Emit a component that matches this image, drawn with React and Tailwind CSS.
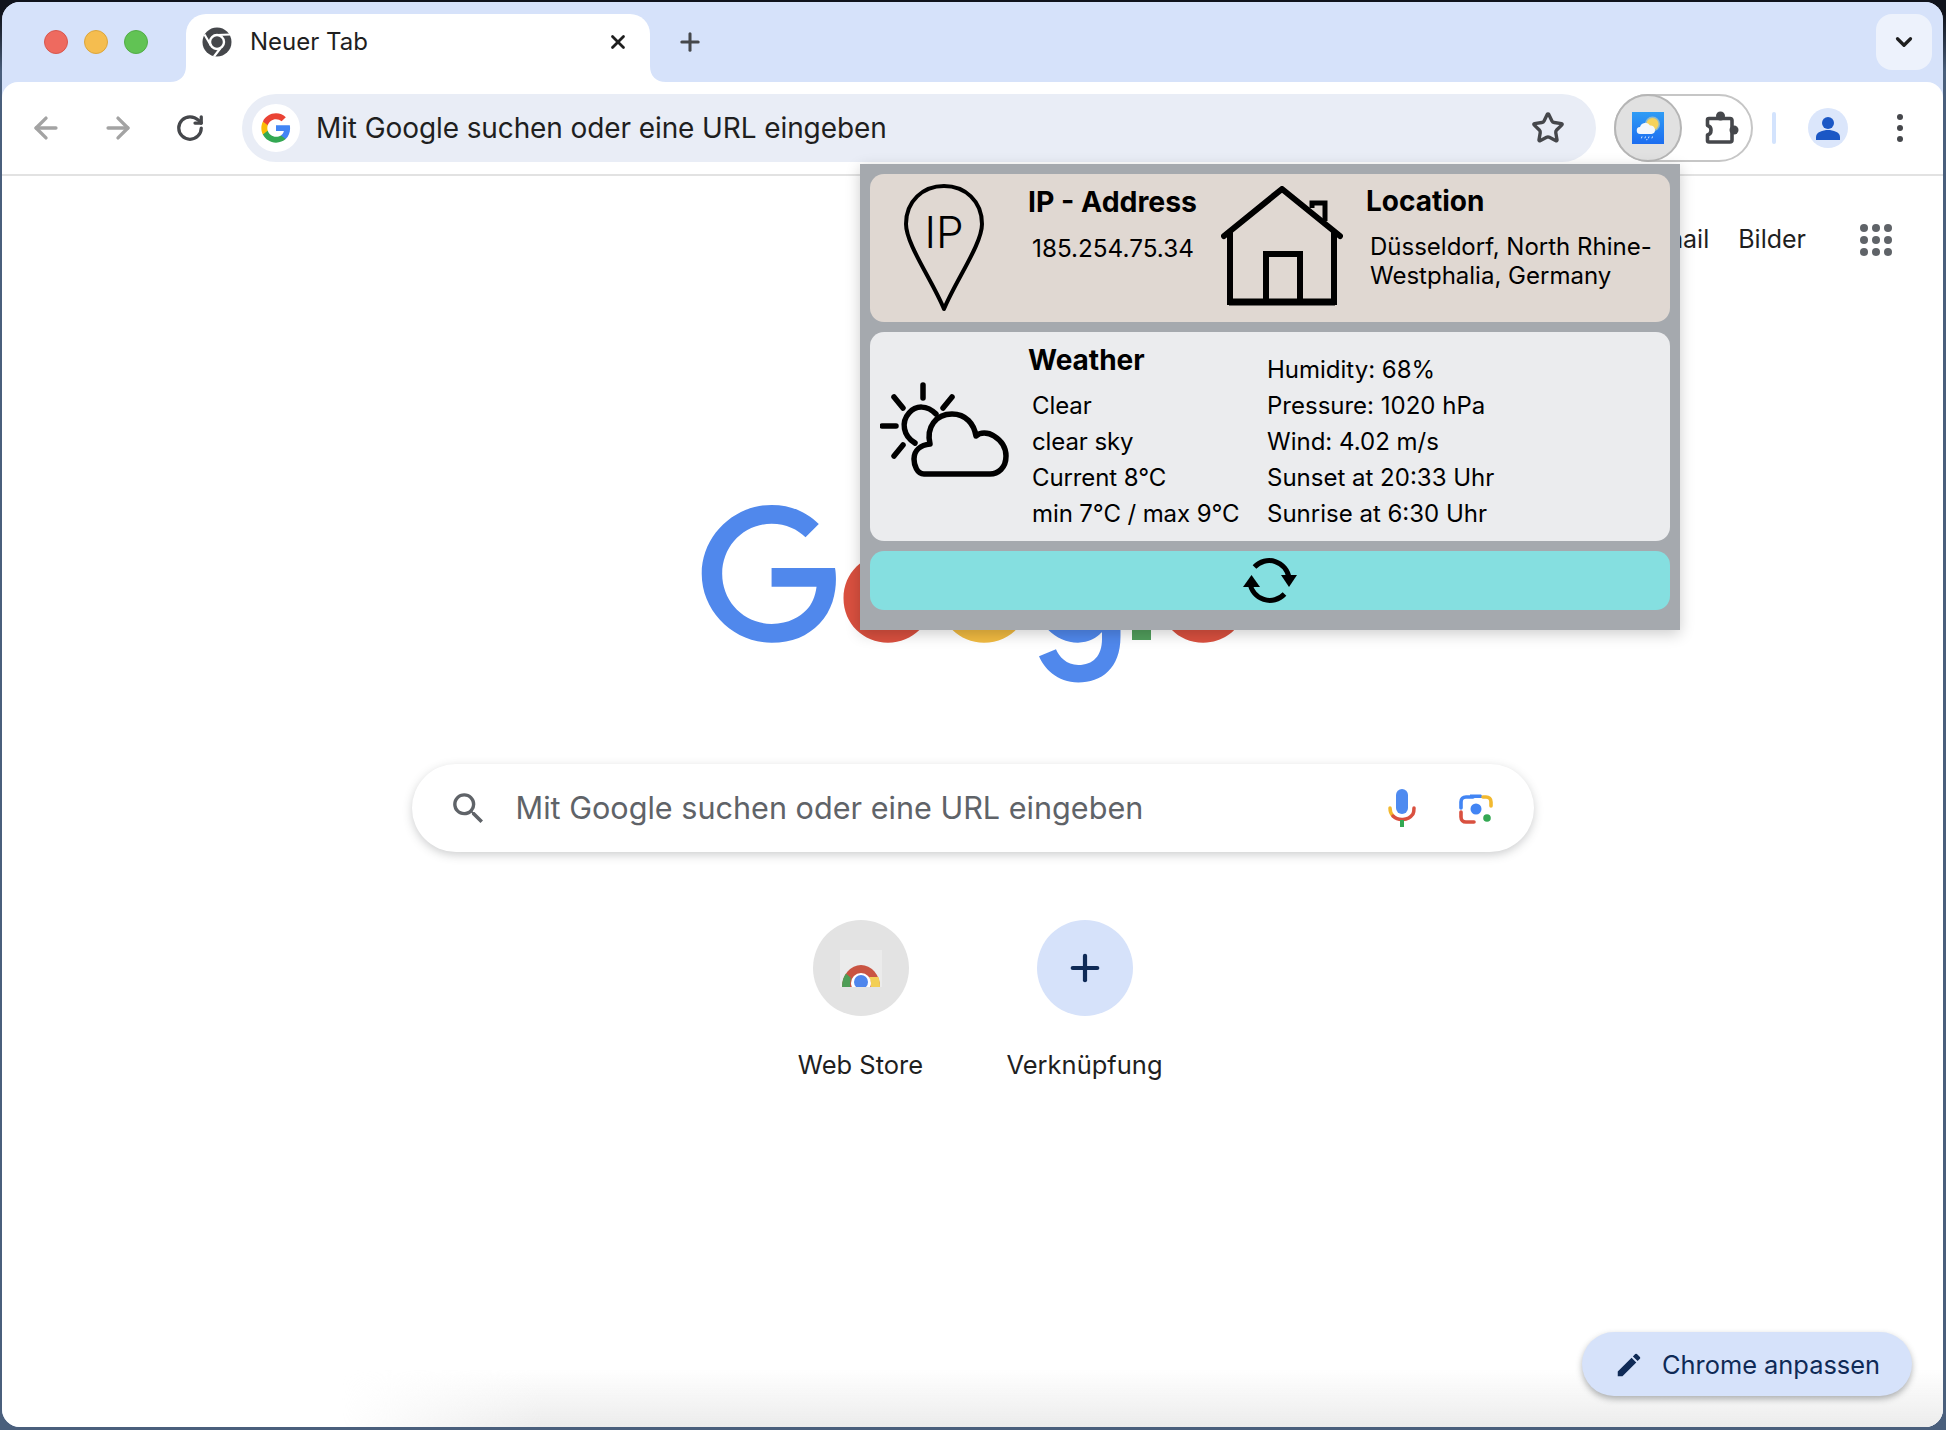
import React from 'react';
import { ArrowLeft, ArrowRight, RotateCw, Star, ChevronDown, Plus, X } from 'lucide-react';

const FONT = "font-['Inter','Noto_Sans',sans-serif]";

const GoogleG = ({ size = 32 }) => (
  <svg width={size} height={size} viewBox="0 0 24 24">
    <path fill="#4285F4" d="M22.56 12.25c0-.78-.07-1.53-.2-2.25H12v4.26h5.92c-.26 1.37-1.04 2.53-2.21 3.31v2.77h3.57c2.08-1.92 3.28-4.74 3.28-8.09z" />
    <path fill="#34A853" d="M12 23c2.97 0 5.46-.98 7.28-2.66l-3.57-2.77c-.98.66-2.23 1.06-3.71 1.06-2.86 0-5.29-1.93-6.16-4.53H2.18v2.84C3.99 20.53 7.7 23 12 23z" />
    <path fill="#FBBC05" d="M5.84 14.09c-.22-.66-.35-1.36-.35-2.09s.13-1.43.35-2.09V7.07H2.18C1.43 8.55 1 10.22 1 12s.43 3.45 1.18 4.93l2.85-2.22.81-.62z" />
    <path fill="#EA4335" d="M12 5.38c1.62 0 3.06.56 4.21 1.64l3.15-3.15C17.45 2.09 14.97 1 12 1 7.7 1 3.99 3.47 2.18 7.07l3.66 2.84c.87-2.6 3.3-4.53 6.16-4.53z" />
  </svg>
);

const GoogleLogo = () => (
  <svg width="544" height="184" viewBox="0 0 272 92">
    <path fill="#D9503F" d="M115.75 47.18c0 12.77-9.99 22.18-22.25 22.18s-22.25-9.41-22.25-22.18C71.25 34.32 81.24 25 93.5 25s22.25 9.32 22.25 22.18zm-9.74 0c0-7.98-5.79-13.44-12.51-13.44S80.99 39.2 80.99 47.18c0 7.9 5.79 13.44 12.51 13.44s12.51-5.55 12.51-13.44z" />
    <path fill="#F0BA41" d="M163.75 47.18c0 12.77-9.99 22.18-22.25 22.18s-22.25-9.41-22.25-22.18c0-12.85 9.99-22.18 22.25-22.18s22.25 9.32 22.25 22.18zm-9.74 0c0-7.98-5.79-13.44-12.51-13.44s-12.51 5.46-12.51 13.44c0 7.9 5.79 13.44 12.51 13.44s12.51-5.55 12.51-13.44z" />
    <path fill="#5088EC" d="M209.75 26.34v39.82c0 16.38-9.66 23.07-21.08 23.07-10.75 0-17.22-7.19-19.66-13.07l8.48-3.53c1.51 3.61 5.21 7.87 11.17 7.87 7.31 0 11.84-4.51 11.84-13v-3.19h-.34c-2.18 2.69-6.38 5.04-11.68 5.04-11.09 0-21.25-9.66-21.25-22.09 0-12.52 10.16-22.26 21.25-22.26 5.29 0 9.49 2.35 11.68 4.96h.34v-3.61h9.25zm-8.56 20.92c0-7.81-5.21-13.52-11.84-13.52-6.72 0-12.35 5.71-12.35 13.52 0 7.73 5.63 13.36 12.35 13.36 6.63 0 11.84-5.63 11.84-13.36z" />
    <path fill="#519E5C" d="M225 3v65h-9.5V3h9.5z" />
    <path fill="#D9503F" d="M262.02 54.48l7.56 5.04c-2.44 3.61-8.32 9.83-18.48 9.83-12.6 0-22.01-9.74-22.01-22.18 0-13.19 9.49-22.18 20.92-22.18 11.51 0 17.14 9.16 18.98 14.11l1.01 2.52-29.65 12.28c2.27 4.45 5.8 6.72 10.75 6.72 4.96 0 8.4-2.44 10.92-6.14zm-23.27-7.98l19.82-8.23c-1.09-2.77-4.37-4.7-8.23-4.7-4.95 0-11.84 4.37-11.59 12.93z" />
    <path fill="#5088EC" d="M35.29 41.41V32H67c.31 1.64.47 3.58.47 5.68 0 7.06-1.93 15.79-8.15 22.01-6.05 6.3-13.78 9.66-24.02 9.66C16.32 69.35.36 53.89.36 34.91.36 15.93 16.32.47 35.3.47c10.5 0 17.98 4.12 23.6 9.49l-6.64 6.64c-4.03-3.78-9.49-6.72-16.97-6.72-13.86 0-24.7 11.17-24.7 25.03 0 13.86 10.84 25.03 24.7 25.03 8.99 0 14.11-3.61 17.39-6.89 2.66-2.66 4.41-6.46 5.1-11.65l-22.49.01z" />
  </svg>
);

const ChromeMono = () => (
  <svg width="30" height="30" viewBox="0 0 30 30">
    <circle cx="15" cy="15" r="14.5" fill="#45474b" />
    <circle cx="15" cy="15" r="7" fill="none" stroke="#fff" strokeWidth="2.4" />
    <path d="M15 8 L28.5 7.5 M8.9 18.5 L2.5 7.5 M18.6 21 L12 29.5" stroke="#fff" strokeWidth="2.2" fill="none" />
  </svg>
);

const WeatherAppIcon = () => (
  <svg width="32" height="32" viewBox="0 0 32 32">
    <defs>
      <linearGradient id="skyGrad" x1="0" y1="0" x2="0" y2="1">
        <stop offset="0" stopColor="#2f9cf5" />
        <stop offset="1" stopColor="#1c6df0" />
      </linearGradient>
    </defs>
    <rect width="32" height="32" fill="url(#skyGrad)" />
    <circle cx="20.5" cy="12" r="7.500" fill="#8fb9c8" />
    <circle cx="20.5" cy="12" r="6" fill="#f6d25a" />
    <path d="M8.500 22a3.500 3.500 0 0 1-.5-7 5.500 5.500 0 0 1 10-1.500 4.300 4.300 0 0 1 5 4.200 4.200 4.200 0 0 1-3.500 4.300z" fill="#f3f7fc" />
    <path d="M10 24.500l-.6 1.800M13.500 24.500l-.6 1.800M17 24.500l-.6 1.800M20.500 24.500l-.6 1.800M15 27l-.3 1.200" stroke="#dbeafe" strokeWidth="1" />
  </svg>
);

const PuzzleIcon = () => (
  <svg width="34" height="36" viewBox="0 0 34 36" fill="none">
    <circle cx="15.500" cy="6" r="4.500" fill="#45474b" />
    <circle cx="29" cy="20" r="4.500" fill="#45474b" />
    <path
      d="M4 8.500H25a2 2 0 0 1 2 2V30a2 2 0 0 1-2 2H4a1.500 1.500 0 0 1-1.500-1.500V25a4.800 4.800 0 0 0 3.500-4.700A4.800 4.800 0 0 0 2.500 15.500V10a1.500 1.500 0 0 1 1.500-1.500z"
      stroke="#45474b"
      strokeWidth="3.600"
      strokeLinejoin="round"
    />
  </svg>
);

const PinIcon = () => (
  <svg width="80" height="128" viewBox="0 0 80 128" fill="none">
    <path d="M40 125 C28 96 2 60 2 40 C2 17 19 2 40 2 C61 2 78 17 78 40 C78 60 52 96 40 125 Z" stroke="#000" strokeWidth="4" strokeLinejoin="round" />
  </svg>
);

const HouseIcon = () => (
  <svg width="122" height="120" viewBox="0 0 122 120" fill="none" stroke="#000">
    <path d="M3 50 L61 3 L119 50" strokeWidth="6" strokeLinecap="round" strokeLinejoin="round" />
    <path d="M9 45 V116 H113 V45" strokeWidth="6" />
    <path d="M8 116 H114" strokeWidth="7" />
    <path d="M45 116 V68 H79 V116" strokeWidth="6" />
    <path d="M91 22 V17 H104 V35" strokeWidth="5" />
  </svg>
);

const WeatherIcon = () => (
  <svg width="130" height="96" viewBox="0 0 130 96" fill="none" stroke="#000" strokeWidth="5.500" strokeLinecap="round" strokeLinejoin="round">
    <path d="M43 3 V16 M14 15 L23 26 M72 15 L63 26 M2 44 H16 M23 63 L14 74" />
    <path d="M56 32 C47 23 36 23 29 31 C21 40 23 54 35 61" />
    <path d="M44 92 C37 92 34 83 34 77 C34 68 41 63 50 62 C46 45 56 32 72 32 C86 32 94 42 96 54 C100 50 108 50 114 54 C122 59 126 66 126 74 C126 86 118 92 110 92 Z" />
  </svg>
);

const SyncIcon = () => (
  <svg width="56" height="46" viewBox="0 0 56 46" fill="none" stroke="#000" strokeWidth="5">
    <path d="M12.500 9 A20 20 0 0 1 47 20" />
    <path d="M42.500 36 A20 20 0 0 1 8 25" />
    <path d="M39 17 H55 L47 29 Z" fill="#000" stroke="none" />
    <path d="M9.500 17 L18 29 H1 Z" fill="#000" stroke="none" />
  </svg>
);

const LensIcon = () => (
  <svg width="36" height="34" viewBox="0 0 36 34" fill="none" strokeWidth="3.600" strokeLinecap="round">
    <path d="M12 3.500 H23 L26 7 H12 Z" fill="#4285f4" />
    <path d="M3 17 V11 C3 8 5 6 8 6 H15" stroke="#4285f4" />
    <path d="M25 6 H28 C31 6 33 8 33 11 V15" stroke="#f2b92f" />
    <path d="M3 21 V26 C3 29 5 31 8 31 H16" stroke="#d9503f" />
    <circle cx="18" cy="18" r="5.500" fill="#4285f4" />
    <circle cx="29" cy="27" r="3.800" fill="#34a853" />
  </svg>
);

const MicIcon = () => (
  <svg width="28" height="40" viewBox="0 0 28 40" fill="none">
    <rect x="8" y="1" width="12" height="25" rx="6" fill="#4f8bf0" />
    <path d="M2 20 C2 24 3 26 5 28" stroke="#f2b92f" strokeWidth="3.500" strokeLinecap="round" />
    <path d="M5 28 C10 33 20 33 25 26 C26 24 26 22 26 20" stroke="#d9503f" strokeWidth="3.500" strokeLinecap="round" />
    <rect x="12" y="32" width="4" height="7" fill="#34a853" />
  </svg>
);

const WebStoreIcon = () => (
  <svg width="42" height="37" viewBox="0 0 42 37">
    <rect width="42" height="37" fill="#ebebeb" />
    <path d="M2 37 A19 22 0 0 1 40 37 Z" fill="#c95442" />
    <path d="M2 37 C2 31 3.500 27 6 23.500 L11 28 C10 31 10 34 10 37 Z" fill="#4f9e57" />
    <path d="M29 27 H38.500 C39.500 30 40 33 40 37 H31 C31 33 30.500 30 29 27 Z" fill="#f3cf55" />
    <circle cx="21" cy="33" r="10" fill="#fff" />
    <circle cx="21" cy="32" r="7" fill="#4f86ec" />
  </svg>
);

const PencilIcon = () => (
  <svg width="30" height="30" viewBox="0 0 24 24" fill="#0f2a56">
    <path d="M3 17.250V21h3.750L17.810 9.940l-3.750-3.750L3 17.250zM20.710 7.040a1 1 0 0 0 0-1.410l-2.340-2.340a1 1 0 0 0-1.410 0l-1.830 1.830 3.750 3.750 1.830-1.830z" />
  </svg>
);

const AvatarIcon = () => (
  <svg width="26" height="26" viewBox="0 0 26 26" fill="#1b57c5">
    <circle cx="13" cy="8" r="6" />
    <path d="M1 25 V22 C1 17 8 15 13 15 C18 15 25 17 25 22 V25 Z" />
  </svg>
);

function TabStrip() {
  return (
    <div className="h-[80px] shrink-0 bg-[#d6e2fa] flex items-end pl-[42px] pr-[11px] relative">
      <div className="flex gap-[16px] h-[56px] items-center self-start mt-[12px] w-[142px] shrink-0">
        <span className="w-[24px] h-[24px] rounded-full bg-[#ee6a5f] border border-[#d8574d]" />
        <span className="w-[24px] h-[24px] rounded-full bg-[#f5bd4f] border border-[#dca63c]" />
        <span className="w-[24px] h-[24px] rounded-full bg-[#61c354] border border-[#52ad46]" />
      </div>
      <div className="relative w-[464px] h-[68px] bg-white rounded-t-[20px] flex items-center pl-[16px] pr-[21px] pb-[12px]">
        <svg className="absolute -left-[16px] bottom-0" width="16" height="16" viewBox="0 0 16 16">
          <path d="M16 0 C16 10 10 16 0 16 H16 Z" fill="#fff" />
        </svg>
        <svg className="absolute -right-[16px] bottom-0" width="16" height="16" viewBox="0 0 16 16">
          <path d="M0 0 C0 10 6 16 16 16 H0 Z" fill="#fff" />
        </svg>
        <ChromeMono />
        <span className="ml-[18px] text-[24px] text-[#1f1f1f] flex-1">Neuer Tab</span>
        <X size={22} strokeWidth={3} className="text-[#1f1f1f]" />
      </div>
      <div className="self-start mt-[26px] ml-[26px] text-[#45474b]">
        <Plus size={28} strokeWidth={2.6} />
      </div>
      <div className="ml-auto self-start mt-[12px] w-[56px] h-[56px] rounded-[16px] bg-[#edf2fc] flex items-center justify-center text-[#1f1f1f]">
        <ChevronDown size={26} strokeWidth={3} />
      </div>
    </div>
  );
}

function Toolbar() {
  return (
    <div className="h-[94px] shrink-0 bg-white rounded-t-[16px] border-b-2 border-[#e2e2e2] flex items-center pl-[27px]">
      <div className="flex items-center gap-[38px] text-[#a3a3a3] w-[213px] shrink-0">
        <ArrowLeft size={34} strokeWidth={2.4} />
        <ArrowRight size={34} strokeWidth={2.4} />
        <RotateCw size={30} strokeWidth={2.6} className="text-[#45474b] ml-[2px]" />
      </div>
      <div className="w-[1354px] h-[68px] rounded-full bg-[#e9edf6] flex items-center pl-[10px] pr-[31px] shrink-0">
        <div className="w-[48px] h-[48px] rounded-full bg-white flex items-center justify-center">
          <GoogleG size={32} />
        </div>
        <span className="ml-[16px] text-[28px] text-[#1f1f1f] flex-1 tracking-[-0.1px]">Mit Google suchen oder eine URL eingeben</span>
        <Star size={34} strokeWidth={2.4} className="text-[#45474b]" />
      </div>
      <div className="ml-[18px] w-[139px] h-[68px] rounded-full border-2 border-[#c6c6c6] flex items-center shrink-0">
        <div className="w-[68px] h-[68px] -ml-[2px] rounded-full bg-[#e1e1e1] border-2 border-[#b5b5b5] flex items-center justify-center">
          <WeatherAppIcon />
        </div>
        <div className="ml-[23px]">
          <PuzzleIcon />
        </div>
      </div>
      <div className="ml-[19px] w-[4px] h-[32px] rounded-full bg-[#d3e3fd]" />
      <div className="ml-[32px] w-[40px] h-[40px] rounded-full bg-[#dbe6fb] flex items-center justify-center overflow-hidden">
        <AvatarIcon />
      </div>
      <div className="ml-[49px] flex flex-col gap-[5px]">
        <span className="w-[6px] h-[6px] rounded-full bg-[#45474b]" />
        <span className="w-[6px] h-[6px] rounded-full bg-[#45474b]" />
        <span className="w-[6px] h-[6px] rounded-full bg-[#45474b]" />
      </div>
    </div>
  );
}

function WeatherPopup() {
  return (
    <div className="absolute left-[858px] top-[162px] z-10 w-[820px] h-[466px] bg-[#a5a9ae] p-[10px] flex flex-col gap-[10px] shadow-[0_4px_14px_rgba(0,0,0,0.2)] text-black">
      <div className="h-[148px] rounded-[14px] bg-[#e0d8d2] flex">
        <div className="relative ml-[34px] mt-[10px] w-[80px] h-[128px] shrink-0">
          <PinIcon />
          <span className="absolute left-0 right-0 top-[24px] text-center text-[44px] leading-[48px] font-light">IP</span>
        </div>
        <div className="ml-[44px] w-[192px] shrink-0 pt-[10px]">
          <div className="text-[28.4px] leading-[36px] font-bold">IP - Address</div>
          <div className="ml-[4px] mt-[10px] text-[24.3px] leading-[36px]">185.254.75.34</div>
        </div>
        <div className="ml-[1px] mt-[12px] shrink-0">
          <HouseIcon />
        </div>
        <div className="ml-[23px] pt-[9px]">
          <div className="text-[28px] leading-[36px] font-bold">Location</div>
          <div className="ml-[4px] mt-[14px] w-[300px] text-[24px] leading-[28.5px]">Düsseldorf, North Rhine-Westphalia, Germany</div>
        </div>
      </div>
      <div className="h-[209px] rounded-[14px] bg-[#ebecee] flex">
        <div className="ml-[10px] mt-[50px] w-[130px] shrink-0">
          <WeatherIcon />
        </div>
        <div className="ml-[18px] w-[239px] shrink-0 pt-[10px]">
          <div className="text-[28px] leading-[36px] font-bold">Weather</div>
          <div className="ml-[4px] text-[24px] leading-[36px] mt-[10px] whitespace-nowrap tracking-[-0.1px]">
            <div>Clear</div>
            <div>clear sky</div>
            <div>Current 8°C</div>
            <div>min 7°C / max 9°C</div>
          </div>
        </div>
        <div className="pt-[20px] text-[24px] leading-[36px]">
          <div>Humidity: 68%</div>
          <div>Pressure: 1020 hPa</div>
          <div>Wind: 4.02 m/s</div>
          <div>Sunset at 20:33 Uhr</div>
          <div>Sunrise at 6:30 Uhr</div>
        </div>
      </div>
      <div className="h-[59px] rounded-[14px] bg-[#85dfe0] flex items-center justify-center">
        <SyncIcon />
      </div>
    </div>
  );
}

function NewTabPage() {
  return (
    <div className="flex-1 relative bg-white flex flex-col items-center overflow-hidden">
      <div className="w-full h-[128px] flex items-center justify-end gap-[29px] pr-[51px] text-[25px] text-[#1f1f1f] shrink-0">
        <span>Gmail</span>
        <span>Bilder</span>
        <div className="ml-[25px] grid grid-cols-3 gap-[4px]">
          {Array.from({ length: 9 }).map((_, i) => (
            <span key={i} className="w-[8px] h-[8px] rounded-full bg-[#5f6368]" />
          ))}
        </div>
      </div>

      <div className="mt-[200px] h-[184px] shrink-0">
        <GoogleLogo />
      </div>

      <div className="mt-[76px] w-[1122px] h-[88px] rounded-full bg-white shadow-[0_3px_10px_rgba(60,64,67,0.25)] flex items-center pl-[36px] pr-[40px] shrink-0">
        <svg width="41" height="41" viewBox="0 0 24 24" fill="#5f6368">
          <path d="M15.5 14h-.79l-.28-.27A6.47 6.47 0 0 0 16 9.500 6.500 6.500 0 1 0 9.500 16c1.610 0 3.090-.590 4.230-1.570l.27.280v.790l5 4.990L20.490 19l-4.990-5zm-6 0C7.010 14 5 11.990 5 9.500S7.010 5 9.500 5 14 7.010 14 9.500 11.990 14 9.500 14z" />
        </svg>
        <span className="ml-[27px] text-[30.6px] text-[#5f6368] flex-1">Mit Google suchen oder eine URL eingeben</span>
        <div className="ml-[1px]">
          <MicIcon />
        </div>
        <div className="ml-[42px]">
          <LensIcon />
        </div>
      </div>

      <div className="mt-[68px] flex shrink-0">
        <div className="w-[224px] flex flex-col items-center">
          <div className="w-[96px] h-[96px] rounded-full bg-[#e3e3e3] flex items-center justify-center">
            <WebStoreIcon />
          </div>
          <span className="mt-[32px] text-[25.5px] leading-[34px] text-[#1f1f1f]">Web Store</span>
        </div>
        <div className="w-[224px] flex flex-col items-center">
          <div className="w-[96px] h-[96px] rounded-full bg-[#d6e2fa] flex items-center justify-center text-[#0f2a56]">
            <Plus size={42} strokeWidth={2.4} />
          </div>
          <span className="mt-[32px] text-[25.5px] leading-[34px] text-[#1f1f1f]">Verknüpfung</span>
        </div>
      </div>

      <div className="absolute bottom-0 left-[340px] right-0 h-[58px] bg-linear-to-t from-[#ececec] to-transparent [mask-image:linear-gradient(to_right,transparent,black_200px)]" />

      <div className="absolute right-[31px] bottom-[31px] w-[330px] h-[64px] rounded-full bg-[#d6e2fa] shadow-[0_3px_6px_rgba(60,64,67,0.4)] flex items-center pl-[32px] pt-[2px] text-[#0f2a56]">
        <PencilIcon />
        <span className="ml-[18px] text-[25.4px]">Chrome anpassen</span>
      </div>
    </div>
  );
}

export default function App() {
  return (
    <div className={`${FONT} w-[1946px] h-[1430px] bg-linear-to-b from-[#10131c] from-1% to-[#4a5f7c] to-5% pt-[2px] pb-[3px] pl-[2px] pr-[3px] overflow-hidden`}>
      <div className="w-full h-full rounded-[18px] overflow-hidden flex flex-col bg-[#d6e2fa] relative">
        <TabStrip />
        <Toolbar />
        <NewTabPage />
        <WeatherPopup />
      </div>
    </div>
  );
}
